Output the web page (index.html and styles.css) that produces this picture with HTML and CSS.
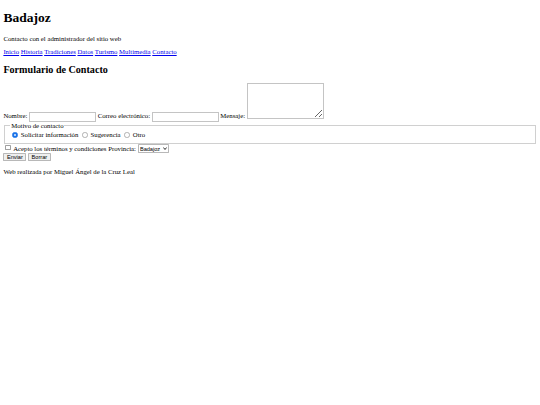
FILE: index.html
```html
<!DOCTYPE html>
<html lang="es">
<head>
<meta charset="utf-8">
<title>Badajoz - Contacto</title>
<link rel="stylesheet" href="styles.css">
</head>
<body class="page">
<header>
<h1 class="title">Badajoz</h1>
<p>Contacto con el administrador del sitio web</p>
<nav class="menu">
<a href="#">Inicio</a>
<a href="#">Historia</a>
<a href="#">Tradiciones</a>
<a href="#">Datos</a>
<a href="#">Turismo</a>
<a href="#">Multimedia</a>
<a href="#">Contacto</a>
</nav>
</header>
<main>
<h2>Formulario de Contacto</h2>
<form>
<label for="nombre">Nombre:</label> <input class="field" type="text" id="nombre" name="nombre">
<label for="correo">Correo electrónico:</label> <input class="field" type="email" id="correo" name="correo">
<label for="mensaje">Mensaje:</label> <textarea class="message" id="mensaje" name="mensaje"></textarea>
<fieldset class="reason">
<legend>Motivo de contacto</legend>
<input class="radio" type="radio" id="info" name="motivo" checked> <label for="info">Solicitar información</label>
<input class="radio" type="radio" id="sug" name="motivo"> <label for="sug">Sugerencia</label>
<input class="radio" type="radio" id="otro" name="motivo"> <label for="otro">Otro</label>
</fieldset>
<input class="check" type="checkbox" id="terminos"> <label for="terminos">Acepto los términos y condiciones</label>
<label for="provincia">Provincia:</label>
<select class="province" id="provincia"><option>Badajoz</option><option>Cáceres</option></select>
<br>
<button class="btn" type="submit">Enviar</button>
<button class="btn" type="reset">Borrar</button>
</form>
</main>
<footer>
<p>Web realizada por Miguel Ángel de la Cruz Leal</p>
</footer>
</body>
</html>
```
FILE: styles.css
```css
html {
  zoom: 0.421875;
  overflow: hidden;
}
.page {
  font-family: "Liberation Serif", "Times New Roman", serif;
  color: #000;
  margin: 8px;
}
.title {
  margin-top: 15px;
}
.field {
  width: 150px;
  box-sizing: content-box;
  padding: 1px 2px;
  border: 2px solid #c4c4c4;
  height: 17px;
}
.message {
  width: 175px;
  height: 75px;
  border: 2px solid #c4c4c4;
}
.reason {
  border: 2px solid #d0d0d0;
}
.radio {
  -webkit-appearance: none;
  appearance: none;
  width: 13px;
  height: 13px;
  margin: 3px 3px 0 5px;
  border: 2px solid #b0b0b0;
  border-radius: 50%;
  background: #fff;
  vertical-align: -1px;
  box-sizing: border-box;
}
.radio:checked {
  border-color: #1a73e8;
  background: radial-gradient(circle, #fff 0 1.5px, #1a73e8 2px);
}
.check {
  -webkit-appearance: none;
  appearance: none;
  width: 13px;
  height: 13px;
  margin: 3px 3px 3px 4px;
  border: 2px solid #a0a0a0;
  border-radius: 2px;
  background: #fff;
  vertical-align: -2px;
  box-sizing: border-box;
}
.province {
  -webkit-appearance: none;
  appearance: none;
  font-family: "Liberation Sans", Arial, sans-serif;
  font-size: 13.33px;
  color: #000;
  background-color: #fff;
  background-image: url("data:image/svg+xml;utf8,<svg xmlns='http://www.w3.org/2000/svg' width='10' height='6' viewBox='0 0 10 6'><path d='M1 1 L5 5 L9 1' fill='none' stroke='black' stroke-width='1.8'/></svg>");
  background-repeat: no-repeat;
  background-position: right 4px center;
  background-size: 10px 6px;
  border: 2px solid #b8b8b8;
  border-radius: 2px;
  padding: 0 18px 0 3px;
  height: 21px;
}
.btn {
  font-family: "Liberation Sans", Arial, sans-serif;
  font-size: 13.33px;
  border: 2px solid #b8b8b8;
  background: #efefef;
  border-radius: 2px;
  padding: 0 6px;
  color: #000;
}
```
